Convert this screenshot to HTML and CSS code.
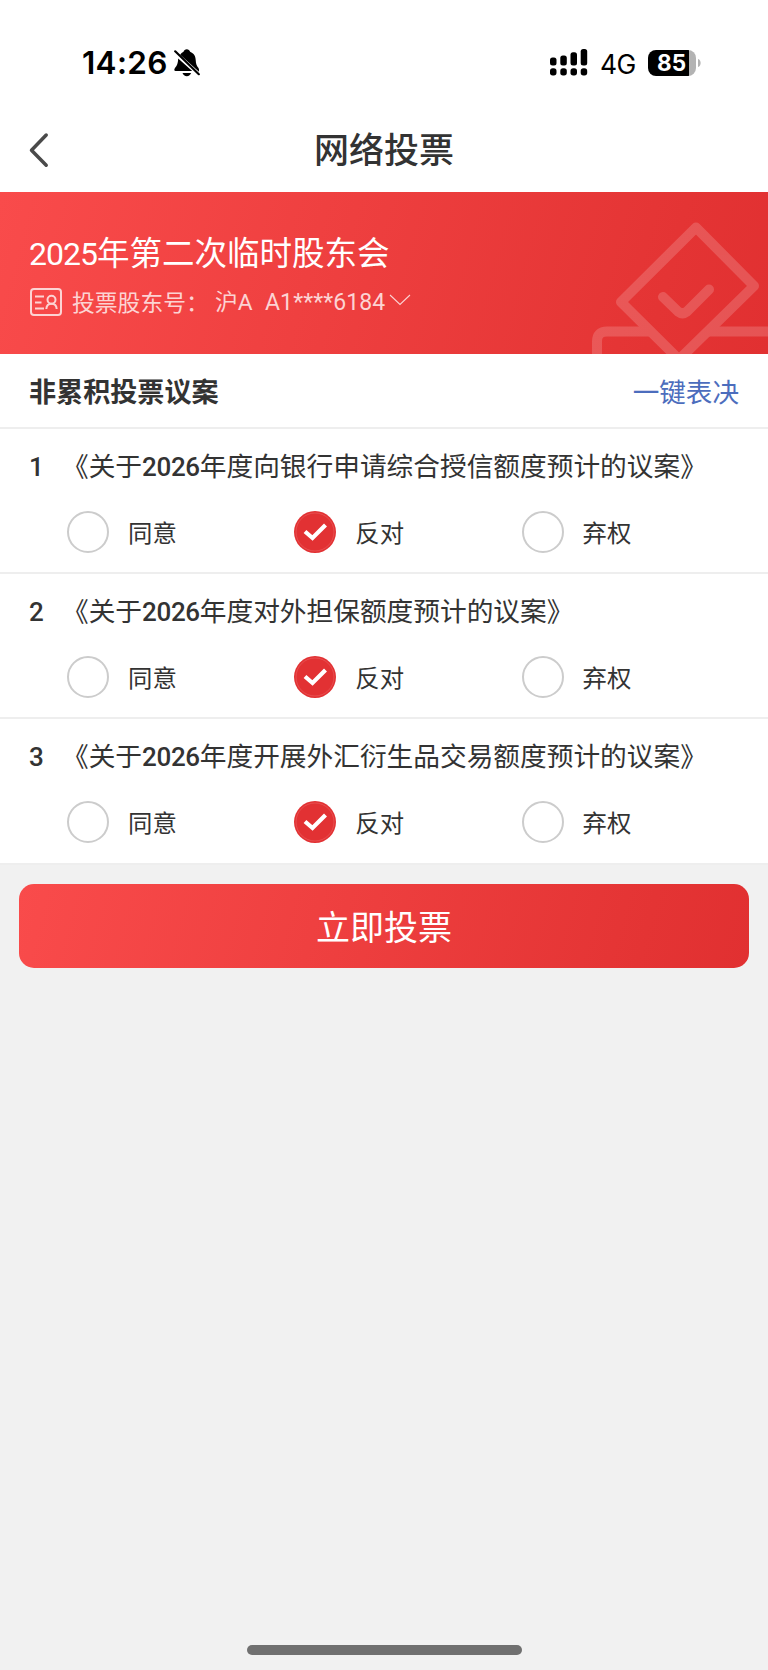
FILE: index.html
```html
<!DOCTYPE html>
<html lang="zh-CN">
<head>
<meta charset="utf-8">
<title>网络投票</title>
<link rel="stylesheet" href="styles.css">
</head>
<body>
<div class="screen">
  <header class="status">
    <span class="time">14:26</span>
    <svg class="bell" width="26" height="28" viewBox="0 0 26 28">
      <path d="M4.2 9.5 18.2 22H1.6C0 22 0 20 1 19c2-2.400 3-4.500 3.200-9.500Z"/>
      <path d="M6.200 5.800C7.500 4 8.500 3.200 9.500 2.800 10 1 11.200.2 12.800.2s2.800.8 3.300 2.600C20 4.500 21.500 7 21.700 11c.2 4 1 6 2.800 8l.5 1.500v2.300Z"/>
      <path d="M8.500 24h8.600c-.6 2-2.300 3.200-4.300 3.200S9.100 26 8.500 24Z"/>
      <path class="slash" d="M1.200 2.300 24.800 25.200"/>
    </svg>
    <svg class="signal" width="38" height="28" viewBox="0 0 38 28">
      <rect x="0" y="8.500" width="6.500" height="8" rx="2.500"/><rect x="10.300" y="6.500" width="6.500" height="10" rx="2.500"/><rect x="20.500" y="3.300" width="6.500" height="13.200" rx="2.500"/><rect x="30.700" y="0" width="6.500" height="16.500" rx="2.500"/>
      <rect x="0" y="19.300" width="6.500" height="7.200" rx="2.700"/><rect x="10.300" y="19.300" width="6.500" height="7.200" rx="2.700"/><rect x="20.500" y="19.300" width="6.500" height="7.200" rx="2.700"/><rect x="30.700" y="19.300" width="6.500" height="7.200" rx="2.700"/>
    </svg>
    <span class="net">4G</span>
    <span class="battery">85</span>
    <svg class="cap" width="4" height="8" viewBox="0 0 4 8"><path d="M0 0C3.500 1 3.500 7 0 8Z"/></svg>
  </header>

  <nav class="nav">
    <svg class="back" width="24" height="38" viewBox="0 0 24 38"><path d="M19.200 4 4.500 19.200 19.200 34.200"/></svg>
    <h1 class="nav-title">网络投票</h1>
  </nav>

  <section class="banner">
    <svg class="ballot" width="176" height="132" viewBox="592 222 176 132">
      <g class="ballot-lines">
        <path d="M597 360V341.500q0-10 10-10H650M709 331.500H775"/>
        <path d="M696 227.500 621 302 679 359.500 754 286Z"/>
        <path d="M663 297 678 311.500q4.500 3.500 9 0L709 289.500"/>
      </g>
    </svg>
    <h2 class="meeting"><span class="num">2025</span>年第二次临时股东会</h2>
    <div class="holder">
      <svg class="card-icon" width="32" height="28" viewBox="0 0 32 28">
        <rect x="1" y="1" width="30" height="26" rx="3"/>
        <path d="M5 8.500h9M5 14.500h6.500M5 20.500h9"/>
        <circle cx="21.500" cy="11.700" r="4"/>
        <path d="M16.300 21c.2-3.300 2-5.300 5.200-5.300s5 2 5.200 5.300"/>
      </svg>
      <span class="holder-label">投票股东号：</span>
      <span class="market">沪<span class="letter">A</span></span>
      <span class="account">A1****6184</span>
      <svg class="drop" width="22" height="12" viewBox="0 0 22 12"><path d="M1 1 11 10.500 21 1"/></svg>
    </div>
  </section>

  <div class="section-head">
    <h3 class="section-title">非累积投票议案</h3>
    <a class="quick">一键表决</a>
  </div>

  <main class="list">
    <article class="item">
      <div class="subject"><span class="index">1</span><span>《关于<span class="num">2026</span>年度向银行申请综合授信额度预计的议案》</span></div>
      <div class="options">
        <label class="option"><i class="radio"></i><span class="option-text">同意</span></label>
        <label class="option"><svg class="tick" width="42" height="42" viewBox="0 0 42 42"><circle class="disc" cx="21" cy="21" r="21"/><circle class="ring" cx="21" cy="21" r="19"/><path d="M11 20.500 18.500 27 31.500 14"/></svg><span class="option-text">反对</span></label>
        <label class="option"><i class="radio"></i><span class="option-text">弃权</span></label>
      </div>
    </article>
    <article class="item">
      <div class="subject"><span class="index">2</span><span>《关于<span class="num">2026</span>年度对外担保额度预计的议案》</span></div>
      <div class="options">
        <label class="option"><i class="radio"></i><span class="option-text">同意</span></label>
        <label class="option"><svg class="tick" width="42" height="42" viewBox="0 0 42 42"><circle class="disc" cx="21" cy="21" r="21"/><circle class="ring" cx="21" cy="21" r="19"/><path d="M11 20.500 18.500 27 31.500 14"/></svg><span class="option-text">反对</span></label>
        <label class="option"><i class="radio"></i><span class="option-text">弃权</span></label>
      </div>
    </article>
    <article class="item">
      <div class="subject"><span class="index">3</span><span>《关于<span class="num">2026</span>年度开展外汇衍生品交易额度预计的议案》</span></div>
      <div class="options">
        <label class="option"><i class="radio"></i><span class="option-text">同意</span></label>
        <label class="option"><svg class="tick" width="42" height="42" viewBox="0 0 42 42"><circle class="disc" cx="21" cy="21" r="21"/><circle class="ring" cx="21" cy="21" r="19"/><path d="M11 20.500 18.500 27 31.500 14"/></svg><span class="option-text">反对</span></label>
        <label class="option"><i class="radio"></i><span class="option-text">弃权</span></label>
      </div>
    </article>
  </main>

  <button class="submit">立即投票</button>
  <div class="home-bar"></div>
</div>
</body>
</html>
```
FILE: styles.css
```css
* { box-sizing: border-box; }
body { margin: 0; }
h1, h2, h3 { margin: 0; font-weight: 400; }
.screen {
  display: flex;
  flex-direction: column;
  width: 768px;
  height: 1670px;
  overflow: hidden;
  background: #f1f1f1;
  color: #333;
  font-family: "Noto Sans CJK SC", sans-serif;
  white-space: nowrap;
}
.num { font-family: Roboto, sans-serif; font-weight: 500; }

.status {
  display: flex;
  align-items: center;
  flex: none;
  height: 108px;
  padding: 17px 0 0 82px;
  background: #fff;
  color: #000;
  font-family: Inter, sans-serif;
}
.time { width: 92px; font-size: 31.5px; font-weight: 600; line-height: 38px; letter-spacing: 0.3px; }
.slash { fill: none; stroke: #000; stroke-width: 2.2; stroke-linecap: round; }
.signal { margin-left: 350px; }
.net { width: 48px; margin-left: 12px; padding-top: 2px; font-size: 26.5px; line-height: 32px; letter-spacing: -0.5px; }
.battery {
  width: 48px;
  height: 26px;
  padding-right: 1px;
  border-radius: 8px;
  background: linear-gradient(90deg, #000 41px, #b3b3b3 41px);
  color: #fff;
  font-size: 22.5px;
  font-weight: 700;
  line-height: 26px;
  text-align: center;
}
.cap { margin-left: 2px; fill: #b3b3b3; }

.nav {
  display: grid;
  grid-template-columns: 80px 1fr 80px;
  align-items: center;
  flex: none;
  height: 84px;
  background: #fff;
}
.back { margin-left: 27px; fill: none; stroke: #4a4a4a; stroke-width: 3.5; stroke-linecap: round; stroke-linejoin: round; }
.nav-title { padding-bottom: 4px; font-size: 35px; font-weight: 500; line-height: 50px; text-align: center; }

.banner {
  position: relative;
  flex: none;
  height: 162px;
  padding: 34px 29px 0;
  background: linear-gradient(105deg, #f94b4b 0%, #e43434 85%, #e13031 100%);
  color: #fff;
}
.ballot { position: absolute; right: 0; bottom: 0; }
.ballot-lines { fill: none; stroke: #fff; stroke-width: 10; stroke-linecap: round; stroke-linejoin: round; opacity: 0.17; }
.meeting { font-size: 32.5px; line-height: 50px; }
.meeting .num { font-size: 32px; letter-spacing: -1px; font-weight: 400; }
.holder { display: flex; align-items: center; height: 36px; margin-top: 6px; padding-left: 1px; color: #fcd3d3; font-size: 22.8px; }
.card-icon { flex: none; margin-top: -3px; fill: none; stroke: #fcd3d3; stroke-width: 2; }
.holder-label { width: 143px; margin-left: 10px; line-height: 36px; padding-bottom: 3px; }
.market { width: 50px; line-height: 36px; padding-bottom: 3px; }
.letter { font-family: Roboto, sans-serif; }
.account { width: 123px; padding-bottom: 1px; font-family: Roboto, sans-serif; font-size: 23px; line-height: 36px; letter-spacing: 0.100px; }
.drop { margin-top: -7px; margin-left: 1px; fill: none; stroke: #fcd3d3; stroke-width: 1.1; }

.section-head {
  display: flex;
  align-items: center;
  justify-content: space-between;
  flex: none;
  height: 75px;
  padding: 0 29px;
  border-bottom: 2px solid #eee;
  background: #fff;
}
.section-title { font-size: 27.1px; font-weight: 700; }
.quick { color: #4c6dbd; font-size: 26.6px; }

.list { flex: none; }
.item { height: 145px; border-bottom: 2px solid #eee; background: #fff; }
.item:last-child { height: 146px; }
.subject { display: flex; height: 82px; padding: 16px 0 0 29px; font-size: 26.7px; line-height: 40px; }
.subject .num { font-size: 26px; letter-spacing: -0.350px; }
.index { width: 33px; padding-top: 2px; font: 500 26px/40px Roboto, sans-serif; }
.options { display: grid; grid-template-columns: repeat(3, 227.300px); padding-left: 67px; }
.option { display: flex; align-items: center; gap: 19px; height: 42px; font-size: 24.4px; }
.option-text { padding-bottom: 2px; }
.radio { width: 42px; height: 42px; border: 2px solid #ccc; border-radius: 50%; }
.disc { fill: #e23133; }
.ring { fill: none; stroke: #ee7879; stroke-width: 0.4; }
.tick path { fill: none; stroke: #fff; stroke-width: 4.2; }

.submit {
  flex: none;
  height: 84px;
  margin: 19px 19px 0;
  padding: 0;
  border: 0;
  border-radius: 15px;
  background: linear-gradient(105deg, #f94b4b 0%, #e43434 85%, #e13031 100%);
  color: #fff;
  font: 400 34px/50px "Noto Sans CJK SC", sans-serif;
}
.home-bar { flex: none; width: 275px; height: 10px; margin: auto auto 15px; border-radius: 5px; background: #707070; }
```
